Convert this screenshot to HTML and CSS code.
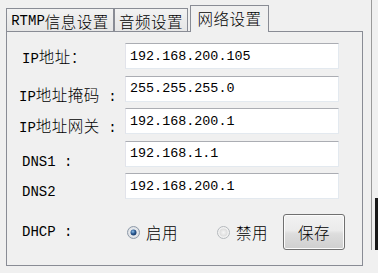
FILE: index.html
```html
<!DOCTYPE html>
<html lang="zh-CN">
<head>
<meta charset="utf-8">
<title>网络设置</title>
<link rel="stylesheet" href="styles.css">
</head>
<body>
<div class="window">
  <div class="main">
    <div class="tabs">
      <div class="tab first">RTMP<span class="c">信息设置</span></div>
      <div class="tab second"><span class="c">音频设置</span></div>
      <div class="tab active"><span class="c">网络设置</span></div>
    </div>
    <div class="panel">
      <div class="form">
        <div class="label l1">IP<span class="c">地址：</span></div>
        <div class="field">192.168.200.105</div>
        <div class="label l2 wide">IP<span class="c">地址掩码</span> :</div>
        <div class="field">255.255.255.0</div>
        <div class="label l3 wide">IP<span class="c">地址网关</span> :</div>
        <div class="field">192.168.200.1</div>
        <div class="label l4">DNS1 :</div>
        <div class="field">192.168.1.1</div>
        <div class="label l5">DNS2</div>
        <div class="field">192.168.200.1</div>
      </div>
      <div class="dhcp">
        <div class="dlabel">DHCP :</div>
        <div class="radio on">
          <svg width="13" height="13" viewBox="0 0 13 13">
            <defs>
              <radialGradient id="rg1" cx="50%" cy="50%" r="50%">
                <stop offset="0" stop-color="#ffffff"/>
                <stop offset="1" stop-color="#d9dde2"/>
              </radialGradient>
              <radialGradient id="dot" cx="40%" cy="35%" r="60%">
                <stop offset="0" stop-color="#8fc0ea"/>
                <stop offset="0.6" stop-color="#2c5c94"/>
                <stop offset="1" stop-color="#1b3e6e"/>
              </radialGradient>
              <radialGradient id="rg2" cx="50%" cy="50%" r="50%">
                <stop offset="0" stop-color="#f6f6f6"/>
                <stop offset="1" stop-color="#dcdcdc"/>
              </radialGradient>
            </defs>
            <circle cx="6.5" cy="6.5" r="6" fill="url(#rg1)" stroke="#8e9aa8"/>
            <circle cx="6.5" cy="6.5" r="3" fill="url(#dot)"/>
          </svg>
          <span class="c">启用</span>
        </div>
        <div class="radio off">
          <svg width="13" height="13" viewBox="0 0 13 13">
            <circle cx="6.5" cy="6.5" r="6" fill="#f2f2f2" stroke="#b4b8bc"/>
            <circle cx="6.5" cy="6.5" r="4" fill="url(#rg2)"/>
          </svg>
          <span class="c">禁用</span>
        </div>
        <button class="save"><span class="c">保存</span></button>
      </div>
    </div>
  </div>
  <div class="edge"><div class="edge-dark"></div></div>
</div>
</body>
</html>
```

FILE: styles.css
```css
html, body {
  margin: 0;
  padding: 0;
  background: #f0f0f0;
}

body {
  font-family: "Liberation Mono", "Noto Sans CJK SC", monospace;
  font-size: 13.4px;
  color: #000;
}

.c {
  font-family: "Noto Sans CJK SC", sans-serif;
  font-size: 15.5px;
  font-weight: 300;
  letter-spacing: 0.5px;
}

.window {
  width: 378px;
  height: 273px;
  display: flex;
  overflow: hidden;
}

.main {
  width: 372px;
  padding: 5px 0 0 6px;
  box-sizing: border-box;
}

.tabs {
  display: flex;
  align-items: flex-end;
  height: 26px;
}

.tab {
  box-sizing: border-box;
  border: 1px solid #898c95;
  border-bottom: none;
  background: linear-gradient(#f2f2f2, #e6e6e6);
  display: flex;
  align-items: center;
  justify-content: center;
  line-height: 16px;
  white-space: nowrap;
}

.tab.first {
  width: 108px;
  height: 23px;
  padding-top: 1px;
  font-size: 14px;
}

.tab.second {
  width: 74px;
  height: 23px;
  padding-top: 1px;
}

.tab.active {
  width: 79px;
  height: 27px;
  margin-left: 2px;
  margin-bottom: -1px;
  background: #f0f0f0;
  position: relative;
  z-index: 1;
  padding-bottom: 2px;
}

.panel {
  box-sizing: border-box;
  width: 357px;
  height: 235px;
  border: 1px solid #898c95;
  background: #f0f0f0;
  padding-top: 11px;
}

.form {
  display: grid;
  grid-template-columns: 118px 214px;
  grid-auto-rows: 26px;
  row-gap: 6.5px;
}

.label {
  align-self: start;
  padding-left: 15px;
  line-height: 16px;
  white-space: nowrap;
  font-size: 14px;
}

.label.wide { padding-left: 12px; }
.l1 { padding-top: 5px; }
.l2 { padding-top: 10px; }
.l3 { padding-top: 9px; }
.l4 { padding-top: 13px; }
.l5 { padding-top: 11px; }

.field {
  box-sizing: border-box;
  background: #fff;
  border: 1px solid #e3e9ef;
  border-top-color: #abadb3;
  border-left-color: #e2e3ea;
  padding-left: 4px;
  display: flex;
  align-items: center;
}

.dhcp {
  display: flex;
  align-items: center;
  height: 36px;
  margin-top: 15px;
}

.dlabel {
  width: 105px;
  padding-left: 15px;
  line-height: 16px;
  font-size: 14px;
}

.radio {
  display: flex;
  align-items: center;
  gap: 6px;
}

.radio svg { display: block; }

.radio.on { width: 90px; }
.radio.off { width: 66px; }

.save {
  box-sizing: border-box;
  width: 62px;
  height: 36px;
  border: 1px solid #707070;
  border-radius: 3px;
  background: linear-gradient(#f2f2f2 0%, #ebebeb 45%, #dddddd 55%, #cfcfcf 100%);
  box-shadow: inset 0 0 0 1px #fcfcfc;
  padding: 0;
  color: #000;
}

.edge {
  width: 6px;
  height: 250px;
  border-left: 1px solid #9a9a9a;
  display: flex;
  flex-direction: column;
  justify-content: flex-end;
  align-items: flex-end;
}

.edge-dark {
  width: 3px;
  height: 52px;
  background: #1a1a1a;
}
```
